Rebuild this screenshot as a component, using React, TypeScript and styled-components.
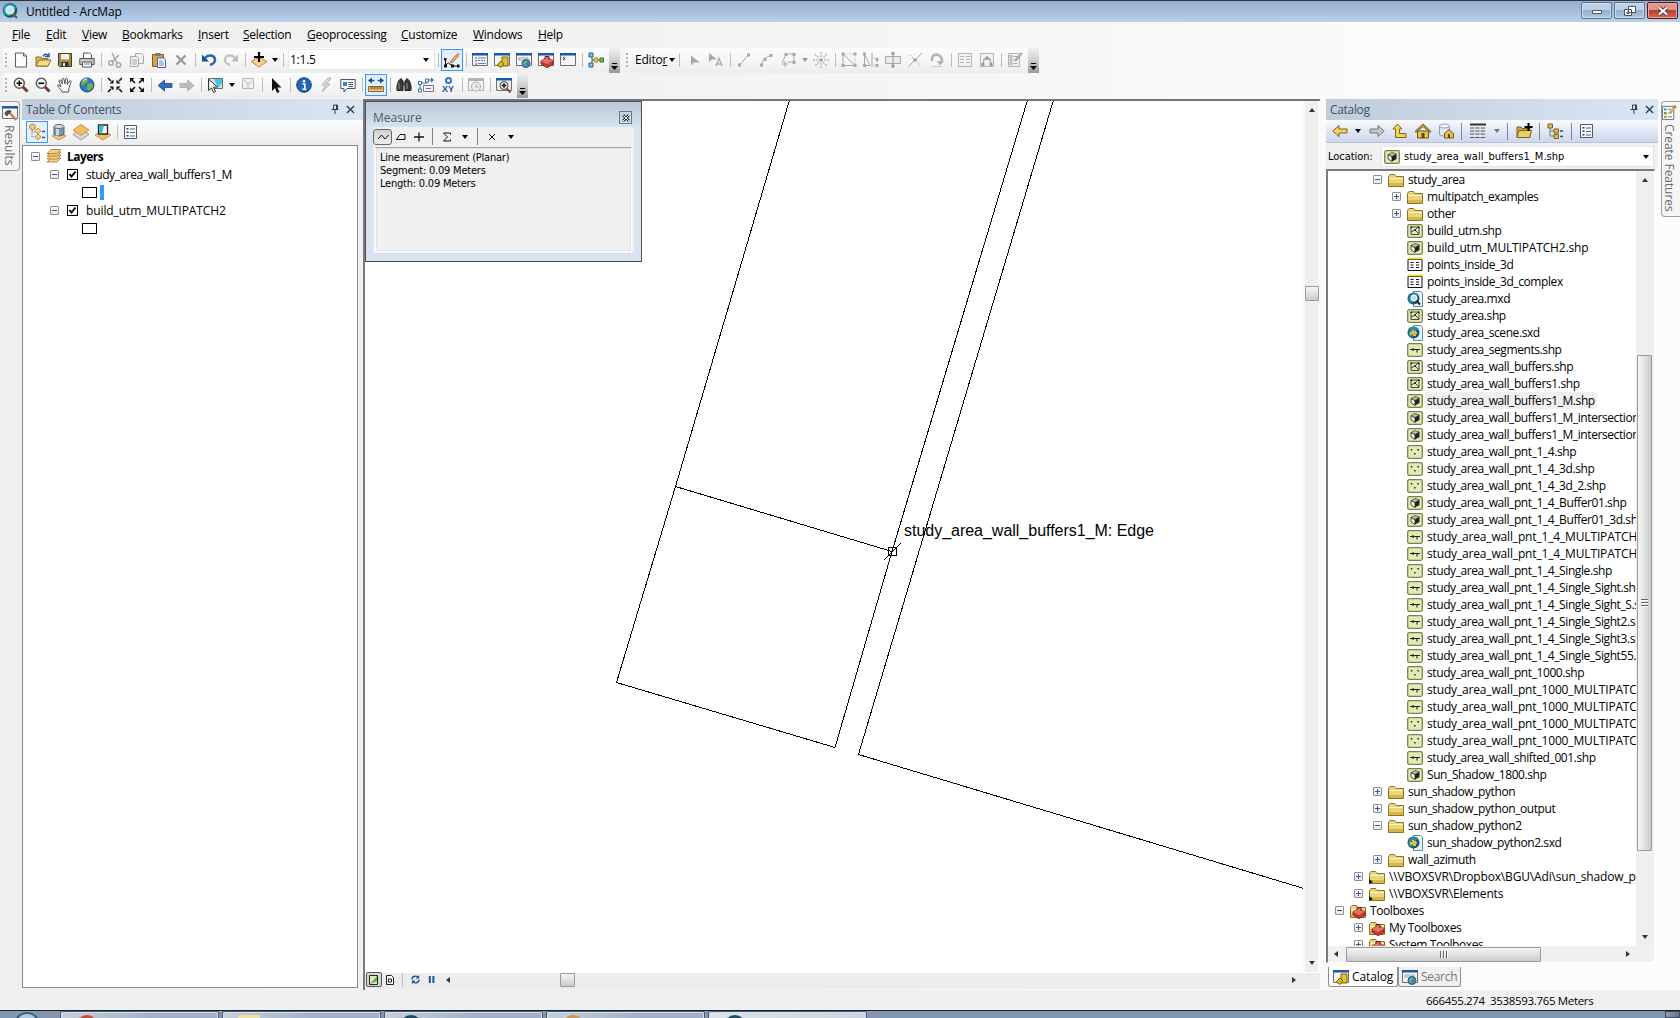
import React from "react";
import styled, { createGlobalStyle, css } from "styled-components";

const UI = `"Open Sans", "Noto Sans", sans-serif`;
const TAHOMA = `"DejaVu Sans Condensed", "DejaVu Sans", sans-serif`;

const Global = createGlobalStyle`
  * { box-sizing: border-box; }
  body { margin: 0; overflow: hidden; background: #f0f0f0; font-family: ${UI}; font-size: 12px; color: #000; }
`;

/* ---------- icons ---------- */

const folder = (
  <>
    <path d="M.5 4.500 2 2.500h4.500l1.500 2h7.500v10H.5z" fill="#e9d67a" stroke="#8c7420" />
    <path d="M1 6.500h14" stroke="#fdf6c4" />
    <path d="M1 11h14v3H1z" fill="#d3b94c" />
  </>
);
const toolbox = (
  <>
    <path d="M3 9 9 5.500l6 3v4l-6 3.200L3 12z" fill="#c63a30" stroke="#7d1712" strokeWidth=".8" />
    <path d="m3 9 6 3 6-3.500-6-3z" fill="#e2746a" />
    <path d="M7 7V4.500h4V8" fill="none" stroke="#6a1a15" />
  </>
);
const win = (
  <>
    <path d="M.5 1.500h15v12H.5z" fill="#f4f4f4" stroke="#6e6e6e" />
    <path d="M0 1h16v2.500H0z" fill="#1f57a8" />
  </>
);
const shp = <rect x=".7" y="1.700" width="14.600" height="12.600" rx="1.500" fill="#e1ecb4" stroke="#75844a" strokeWidth="1.300" />;
const globe = (
  <>
    <circle cx="8" cy="8" r="7" fill="#2f79bd" stroke="#1d4c80" />
    <path d="M4 3c3-2 6-1 5 1S6 6 5 8 2 7 2 6zM9 7c3-2 5 0 5 2s-3 5-5 4-1-5 0-6z" fill="#72b04d" />
    <path d="M4 4c1-1.500 3-2 4-1.700" stroke="#cfe9fa" strokeWidth="1.200" fill="none" />
  </>
);
const lens = (
  <>
    <path d="m9.500 9.500 5 5" stroke="#7c3b22" strokeWidth="3" />
    <circle cx="6.300" cy="6.300" r="5" fill="#f4f8fb" stroke="#5c5c5c" strokeWidth="1.500" />
  </>
);
const sheet = <path d="M6.500.500h7l2 2v13h-9z" fill="#e9f2f8" stroke="#5e87a8" />;
const mapGlobe = (
  <>
    <circle cx="6.500" cy="7.500" r="6" fill="#15597c" />
    <path d="M2 5c2-4 7-4 9-1l-3 3-3 5C1 12 1 8 2 5z" fill="#2a8f9b" />
  </>
);
const diamond = <path d="M8 8.500 15 12l-7 4-7-4z" fill="#f3c876" stroke="#b5823a" strokeWidth=".8" />;
const g = "#a9a9a9";

const icons: Record<string, React.ReactNode> = {
  app: (
    <>
      <circle cx="8" cy="7.500" r="7.300" fill="#0f5b70" />
      <path d="M1.500 5C3 0 12 0 14 5l-4 2-2 6C2 13 1 9 1.500 5z" fill="#2aa3a8" />
      <path d="m10 10 5 5" stroke="#8a5228" strokeWidth="2.400" />
      <circle cx="8" cy="7" r="4" fill="#bfe3f2" stroke="#e8f5fa" strokeWidth="1.200" />
    </>
  ),
  new: <path d="M2.500 1h8l3 3v11h-11zM10.500 1v3h3" fill="#fdfdff" stroke="#55606e" />,
  open: (
    <>
      <path d="M1 5h5l1 1.500h6V14H1z" fill="#d9b95c" stroke="#8c7024" />
      <path d="m1 14 3-6h12l-3 6z" fill="#f6dd85" stroke="#8c7024" />
      <path d="M8 4.500C9 1.500 12 2 13 3.500M14 1v3.500h-4" stroke="#1b5cab" strokeWidth="1.400" fill="none" />
    </>
  ),
  save: (
    <>
      <path d="M1.500 1.500h13v13h-12l-1-1z" fill="#a38b3c" stroke="#3f3a24" />
      <path d="M4 2h8v5.500H4z" fill="#f0f0f0" />
      <path d="M4.500 10h7v4h-7z" fill="#333" />
      <path d="M6 11h2v3H6z" fill="#eee" />
    </>
  ),
  print: (
    <>
      <path d="M4.500 6V1h6l2 2v3" fill="#fff" stroke="#555" />
      <path d="M.8 6.500h14.400v6H.8z" fill="#c9c9c4" stroke="#555" />
      <path d="M3.500 10h9v5h-9z" fill="#fff" stroke="#555" />
      <path d="M5 12h6" stroke="#4b7fb8" /><path d="M12 8h2" stroke="#d9a520" />
    </>
  ),
  cut: (
    <g fill="none" stroke={g} strokeWidth="1.500">
      <path d="m5 1 5 10M12 3 5 10" /><circle cx="4" cy="11" r="2.200" /><circle cx="11.500" cy="13" r="2.200" />
    </g>
  ),
  copy: (
    <g fill="#f1f1f1" stroke={g}>
      <path d="M6.500 1.500h6l2 2v8h-8z" /><path d="M1.500 4.500h6l2 2v8h-8zM3 8h5M3 10h5M3 12h5" />
    </g>
  ),
  paste: (
    <>
      <path d="M1.500 2.500h11v12h-11z" fill="#d8a04a" stroke="#8a5a1c" />
      <path d="M4.500 1h5v3h-5z" fill="#777" />
      <path d="M6.500 6h6l2 2v7.500h-8z" fill="#fff" stroke="#49658c" /><path d="M8 9h4M8 11h5M8 13h5" stroke="#5c86bf" />
    </>
  ),
  del: <path d="m3.500 3.500 9 9m0-9-9 9" stroke="#999" strokeWidth="2.400" />,
  undo: <><path d="M4 6c3-4 9-3 10 1 .5 3-2 5-5 6" fill="none" stroke="#2c63a8" strokeWidth="2.400" /><path d="M1 2.500v7h7z" fill="#1b4f95" /></>,
  redo: <><path d="M12 6C9 2 3 3 2 7c-.5 3 2 5 5 6" fill="none" stroke="#c4c4c4" strokeWidth="2.400" /><path d="M15 2.500v7H8z" fill="#bababa" /></>,
  add: <><path d="m8 5 8 4.500L8 15 0 9.500z" fill="#f4d18f" stroke="#b98b44" /><path d="M8 0v10M3 5h10" stroke="#000" strokeWidth="2.200" /></>,
  pencil: (
    <>
      <path d="M1.500 7v6l3-2 4 3h5" fill="none" stroke="#111" />
      <path d="M0 6h2.500v2.500H0zM0 12.500h3v3H0zM7 12.500h3v3H7zM13 12.500h2.500v3H13z" fill="#111" />
      <path d="m7 9 5.500-6.500L14.500 4 9 10l-2.500 1z" fill="#f2b44a" stroke="#7b5c33" strokeWidth=".7" /><path d="m12.500 2.500 1.200-2L16 2l-1.500 2z" fill="#d99a8f" />
    </>
  ),
  wToc: <>{win}<path d="M3 6h2M3 9h2M3 12h2" stroke="#1f57a8" /><path d="M6 6h8M6 11.500h8" stroke="#3c8fd0" /><path d="M6 8.500h7" stroke="#c44" strokeDasharray="2 1" /></>,
  wCat: <>{win}<path d="M8 5h6v9H8z" fill="#e3c22d" stroke="#7b6410" /><path d="m3 13 4-4 3 3-3 3.500z" fill="#d7b823" stroke="#7b6410" /></>,
  wSearch: <>{win}<path d="M3 6h9v2H3z" fill="#fff" stroke="#888" strokeWidth=".8" /><circle cx="10" cy="11.500" r="4" fill="#3b86ba" stroke="#2d5f87" /><path d="M9 9c2-1 3 1 1 2s0 3-1 3-3-3 0-5z" fill="#7dbb57" /></>,
  wTool: <>{win}{toolbox}</>,
  wPy: <>{win}<path d="m3 5 2 1.500L3 8" fill="none" stroke="#222" /></>,
  model: (
    <>
      <path d="M4 3v10M4 8h10" stroke="#555" />
      <path d="M1 1h4v4H1zM1 11h4v4H1z" fill="#7cc4ef" stroke="#1f5f9f" />
      <circle cx="8" cy="8" r="2.200" fill="#f3d43c" stroke="#8a7412" /><path d="M12 6h3.500v4H12z" fill="#86c063" stroke="#35702a" />
    </>
  ),
  zoomIn: <>{lens}<path d="M3.500 6.300h5.600M6.300 3.500v5.600" stroke="#000" strokeWidth="1.600" /></>,
  zoomOut: <>{lens}<path d="M3.500 6.300h5.600" stroke="#000" strokeWidth="1.600" /></>,
  hand: <path d="M5 15c-1-3-4-5-4.500-6.500C1 7.500 2.500 8 4 10L2 4c0-1.500 1.500-1.500 2 0l1.500 3L5 2.500C5 1 6.800 1 7 2.500L8 7l.5-5c.3-1.300 2-1 2 .5L10.300 7.500 12.500 4c.8-1 2 0 1.500 1l-2 6-.5 4z" fill="#fdfdfd" stroke="#444" strokeWidth=".9" />,
  globe,
  fixIn: <g stroke="#111" strokeWidth="1.600" fill="#111"><path d="m1 1 3 3M15 1l-3 3M1 15l3-3M15 15l-3-3" /><path d="M6.500 2.500v4h-4zM9.500 2.500v4h4zM6.500 13.500v-4h-4zM9.500 13.500v-4h4z" stroke="none" /></g>,
  fixOut: <g stroke="#111" strokeWidth="1.600" fill="#111"><path d="m6 6-3-3M10 6l3-3M6 10l-3 3M10 10l3 3" /><path d="M1 5.500V1h4.500zM15 5.500V1h-4.500zM1 10.500V15h4.500zM15 10.500V15h-4.500z" stroke="none" /></g>,
  back: <path d="M1 8.500 7.500 3v3.500H15v4H7.500V14z" fill="#2d6dc4" stroke="#1a4a92" strokeWidth=".8" />,
  fwd: <path d="M15 8.500 8.500 3v3.500H1v4h7.500V14z" fill="#bdbdbd" stroke="#a5a5a5" strokeWidth=".8" />,
  select: <><path d="M1.500 1.500h14v10h-14z" fill="#d7e6ea" stroke="#667" /><path d="M7 2h8v4l-4 5z" fill="#4cc3e4" /><path d="M1.500 2v11.500l3-2.500 2 4.500 2-1-2-4.300 4-.2z" fill="#f4f4f4" stroke="#333" /></>,
  clear: <path d="M2.500 1.500h11v10h-11zM4 3l4 4 4-3M8 7v4" fill="#f0f0f0" stroke="#b5b5b5" />,
  cursor: <path d="M4 1v13l3-3 2 5 2.500-1L9.300 10.500h4.200z" fill="#111" />,
  info: <><circle cx="8" cy="8" r="7.300" fill="#2565b4" stroke="#123f7b" /><circle cx="8" cy="4.300" r="1.300" fill="#fff" /><path d="M6.500 7h2.300v5M6.300 12.200h4" stroke="#fff" strokeWidth="1.600" fill="none" /></>,
  bolt: <path d="M10 1 4 8h3.500L4 15l8-8H8.500L13 1z" fill="#dcdcdc" stroke="#b0b0b0" />,
  popup: <><path d="M.8 2.500h14.400v9H7l-3 3.500v-3.500H.8z" fill="#f6fafd" stroke="#44586e" /><path d="M3 5h4v4H3z" fill="#3a86c7" /><path d="M8.500 5.500H13M8.500 7.500H13M8.500 9.500H13" stroke="#456" /></>,
  measure: <><path d="M1 3.500h5.500M9.500 3.500H15" stroke="#17539a" strokeWidth="1.700" /><path d="M4 .5v6L0 3.500zM12 .5v6l4-3z" fill="#17539a" /><path d="M.5 9.500h15v5H.5z" fill="#f1c981" stroke="#8d6325" /><path d="M3 10v2.500M5 10v2.500M7 10v2.500M9 10v2.500M11 10v2.500M13 10v2.500" stroke="#6d4715" /></>,
  binoc: <><path d="M2.500 4 5 1.500 7 4v9.500H1V9zM13.500 4 11 1.500 9 4v9.500h6V9z" fill="#3a3a3a" stroke="#222" /><path d="M7 5h2v4H7z" fill="#555" /><path d="M3 6v6M11 6v6" stroke="#999" /></>,
  route: <><path d="M2 13V6h7V3h4" fill="none" stroke="#2f73a7" /><path d="M.5 4.500h3v3h-3zM.5 12h3v3h-3zM7.500 2h3v3h-3z" fill="#fff" stroke="#2f73a7" /><path d="m13 .5 3 2.500-3 2.500z" fill="#2f73a7" /><path d="M5.500 8.500h10v6h-10zM8 11.500h5" fill="#eef" stroke="#778" /></>,
  time: <g fill="none" stroke="#b3b3b3" strokeWidth="1.200"><path d="M.5 13.500V1.500h15v12z" /><path d="M.5 3h15" strokeWidth="2" /><circle cx="8" cy="9.500" r="4.500" fill="#eee" /><path d="M8 7v3h2.500" /></g>,
  viewer: <>{win}<path d="m10.500 11.500 4 4" stroke="#8a4a2a" strokeWidth="2" /><circle cx="8" cy="8.500" r="4" fill="#f7f7f7" stroke="#444" /><path d="M5.500 8.500h5M8 6v5" stroke="#111" strokeWidth="1.300" /></>,
  eArrow: <path d="M5 3.500v10l3-3h6z" fill={g} />,
  eArrowA: <><path d="M1 1v9l3-2.500h5z" fill={g} /><path d="m8 14 3-7.500 3 7.500M9 12h4" fill="none" stroke="#b5b5b5" strokeWidth="1.600" /></>,
  eLine: <><path d="m3.500 13 9-10" stroke={g} /><path d="M2 11.500h3v3H2zM11 1.500h3v3h-3z" fill={g} /></>,
  eArc: <><path d="M3.500 13c1-6 4-7 9-9.500" stroke={g} fill="none" /><path d="M2 11.500h3v3H2zM5.500 6h3v3h-3zM11.500 2h3v3h-3z" fill={g} /></>,
  ePoly: <><path d="m2 11 4-9h8v8H8M5 9v6M2 12h6" stroke={g} fill="none" /><path d="M4.500 1h3v3h-3zM12.500 1h3v3h-3zM12.500 9h3v3h-3z" fill={g} /></>,
  eBurst: <><path d="M8 0v5M8 11v5M0 8h5M11 8h5M2 2l4 4M10 10l4 4M14 2l-4 4M6 10l-4 4" stroke="#b9b9b9" strokeWidth="1.500" strokeDasharray="2 1" /><path d="M6.500 6.500h3v3h-3z" fill="#999" /></>,
  eReshape: <><path d="M2 2v11.500h12L2 2" fill="none" stroke={g} /><path d="M3 2h11v10" fill="none" stroke={g} strokeDasharray="1 1.500" /><path d="M.5.500h3v3h-3zM.5 12h3v3h-3zM12.500 12h3v3h-3zM12.500.500h3v3h-3z" fill={g} /></>,
  eCut: <><path d="M1.500 2v11.500h5.500L1.500 2M9 1v14" fill="none" stroke={g} /><path d="m9 5 5 3v5H9" fill="none" stroke={g} strokeDasharray="1 1.500" /><path d="M0 .5h3v3H0zM0 12h3v3H0zM12.500 12h3v3h-3zM12.500 6h3v3h-3z" fill={g} /></>,
  eSplit: <><path d="M.5 4.500h15v7H.5z" fill="#ececec" stroke={g} /><path d="M8 1v14" stroke="#999" /><path d="M6.500 0h3v3h-3zM6.500 12.500h3v3h-3z" fill="#999" /></>,
  eX: <><path d="M1 15 15 1" stroke={g} /><path d="m3 3 10 10" stroke={g} strokeDasharray="1.500 1.500" /><path d="M6.500 6.500h3v3h-3z" fill="#999" /></>,
  eRot: <><path d="M3 9c-2-8 10-9 10 0" fill="none" stroke="#b5b5b5" strokeWidth="2.600" /><path d="M8 9h7l-4 4.500z" fill="#b0b0b0" /><path d="M3 14.500h10" stroke="#ccc" /></>,
  eTable: <path d="M1.500 1.500h13v13h-13zM3 4.500h4M3 7.500h4M3 10.500h4M9 4.500h4M9 7.500h4M9 10.500h4" fill="#f2f2f2" stroke="#b3b3b3" />,
  eSketch: <><path d="M1.500 1.500h13v13h-13z" fill="#f2f2f2" stroke="#b3b3b3" /><path d="m4 12 1-5h6l1 5" fill="none" stroke={g} strokeWidth="1.300" /><path d="M2.500 11h3v3h-3zM6.500 4.500h3v3h-3zM10.500 11h3v3h-3z" fill="#999" /></>,
  eCreate: <><path d="M1.500 1.500h11v13h-11z" fill="#f2f2f2" stroke="#b3b3b3" /><path d="M3 3.500h2v2H3zM3 7h2v2H3zM3 10.500h2v2H3zM6.500 4.500h5M6.500 8h3M6.500 11.500h4" stroke={g} fill="none" /><path d="m8 9 7-8" stroke="#aaa" strokeWidth="2.400" /></>,
  create: (
    <>
      <path d="M.5 1.500h12v14H.5z" fill="#fbfdff" stroke="#5f7286" />
      <path d="M2 3.500h3v2.500H2z" fill="#3fa0d8" /><path d="M2 7.500h3V10H2z" fill="#4ea64a" /><path d="M2 11.500h3V14H2z" fill="#e08a3a" />
      <path d="M6.500 8.500h4M6.500 12.500h4M6.500 4.500h3" stroke="#4c6687" />
      <path d="m8 9 5-6.500" stroke="#e0a648" strokeWidth="2.600" /><path d="m13 3 1.500-2" stroke="#d06a66" strokeWidth="3" />
    </>
  ),
  hammer: <>{win}<path d="M3 9c0-3 3-4 6-3l-1 2-2 1-1 2z" fill="#555" stroke="#222" strokeWidth=".7" /><path d="m8 8 6 7" stroke="#c8814d" strokeWidth="2.500" /></>,
  layers: <g fill="#f2cf8a" stroke="#b07e32" strokeWidth=".9"><path d="m1 14 4-4h10l-4 4z" /><path d="m1 11 4-4h10l-4 4z" /><path d="m1 8 4-4h10l-4 4z" /><path d="m1 5.500 4-4h10l-4 4z" /></g>,
  tDraw: <><path d="M3 4v9h5M3 8h5" fill="none" stroke="#777" strokeDasharray="1 1" /><circle cx="3.500" cy="3" r="2.800" fill="#f3cd86" stroke="#b98537" /><path d="m9 4 3 3-3 3-3-3zM9 10l3 3-3 3-3-3z" fill="#f3cd86" stroke="#b98537" strokeWidth=".8" /><path d="M13 7.500h3M13 13.500h3" stroke="#1f57a8" strokeWidth="1.500" /></>,
  tSource: <>{diamond}<path d="M3 2.500h10v8q-5 3-10 0z" fill="#7f95ad" stroke="#4e6178" /><path d="M5 4h3v7.500H5z" fill="#c9d5e1" /><ellipse cx="8" cy="2.500" rx="5" ry="2" fill="#d8e1ea" stroke="#52677f" /></>,
  tVis: <><path d="M0 10.500 8 5l8 5.500L8 16z" fill="#d8d8d8" stroke="#888" strokeWidth=".8" /><path d="M0 6 8 .5 16 6l-8 5.500z" fill="#f0be62" stroke="#b98537" strokeWidth=".8" /></>,
  tSel: <><path d="m8 6 8 5-8 5-8-5z" fill="#f0be62" stroke="#b98537" strokeWidth=".8" /><path d="M3.500 1h9v9h-9z" fill="#fff" stroke="#222" strokeWidth="1.300" /><path d="M4 1.500h5L7 9.500H4z" fill="#35bdd8" /></>,
  opts: <><path d="M2.500 1.500h12v13h-12z" fill="#f7fafd" stroke="#4a5a6c" /><path d="M4.500 4h2v1.500h-2zM4.500 7.500h2V9h-2zM4.500 11h2v1.500h-2z" fill="#2b3f57" /><path d="M8 5h5M8 8.500h5M8 12h5" stroke="#4c6687" /></>,
  cBack: <path d="M.8 8 7 2.500V6h8v4H7v3.500z" fill="#f0d35a" stroke="#7d6616" />,
  cFwd: <path d="M15.200 8 9 2.500V6H1v4h8v3.500z" fill="#c6c6c6" stroke="#777" />,
  cUp: <path d="M5.500 1 10 6H7.500v4.500H14v4H3.500V6H1z" fill="#f0d35a" stroke="#7d6616" />,
  home: <><path d="M2.500 8v7h11V8z" fill="#e6c651" stroke="#6d5812" /><path d="M0 8.500 8 1l8 7.500-1 .8L8 3.500 1 9.300z" fill="#cfae3a" stroke="#6d5812" /><path d="M6.500 10h3v5h-3z" fill="#5f4b0b" /></>,
  homeDb: <><path d="M1.500 3v9q5 3 10 0V3z" fill="#dfe8f3" stroke="#8ba0bb" /><ellipse cx="6.500" cy="3" rx="5" ry="2" fill="#f5f8fc" stroke="#8ba0bb" /><path d="m6.500 10.500 4.500-4 4.500 4v4.500h-9z" fill="#e3c04c" stroke="#6d5812" /><path d="M10 11h2v4h-2z" fill="#5f4b0b" /></>,
  grid: <><path d="M0 1.500h16" stroke="#333" strokeWidth="2" /><path d="M0 5h16M0 8h16M0 11h16M0 14.500h16" stroke="#555" strokeDasharray="4.300 1" /></>,
  folderAdd: <><path d="M1 4h4l1 1.500h8v9H1z" fill="#c8a93c" stroke="#7a6417" /><path d="m1 14.500 2-7h12.500l-2 7z" fill="#ead068" stroke="#7a6417" /><path d="M12.500 0v8M8.500 4h8" stroke="#000" strokeWidth="2" /></>,
  cTree: <><path d="M3 4v9h4M3 8h4" fill="none" stroke="#777" /><path d="M1 1h4.500v4H1zM7 6h4.500v4H7zM7 11.500h4.500v4H7z" fill="#d9bd49" stroke="#7a6417" /><path d="M13 8h3M13 13.500h3" stroke="#1f57a8" strokeWidth="1.500" /></>,
  folder,
  folderLink: <>{folder}<path d="M0 15v-5l4 3z" fill="#111" /></>,
  toolFolder: <>{folder}{toolbox}</>,
  poly: <>{shp}<path d="M4 4h8v7.500H4zM4 9l4-2 4 4M8 7l3-3" fill="none" stroke="#334" strokeWidth=".9" /><path d="M3.500 3.500H5V5H3.500zM7.300 6.300h1.500v1.500H7.300zM11 3.500h1.500V5H11z" fill="#111" /></>,
  line: <>{shp}<path d="M3 7.500h10M6 6v3M10 7v3.500" stroke="#222" strokeWidth="1.100" /></>,
  point: <>{shp}<path d="M3.800 5h1.600v1.600H3.800zM10.300 5h1.600v1.600h-1.600zM7 9h1.600v1.600H7z" fill="#333" /></>,
  patch: <>{shp}<path d="M4 5.500v4.300L8 12.500V7.500z" fill="#f7f7ef" stroke="#222" strokeWidth=".8" /><path d="m4 5.500 4-2 4.500 1.500L8 7.500z" fill="#b9bda5" stroke="#222" strokeWidth=".6" /><path d="m8 7.500 4.500-2.500v5L8 12.500z" fill="#222" /></>,
  table: <><path d="M1 2.500h14v11H1z" fill="#fff" stroke="#111" /><path d="M.5 1.500h15" stroke="#e8dc2e" strokeWidth="1.800" /><path d="M3.500 5.500h3M3.500 8h3M3.500 10.500h3M9 5.500h3M9 8h3M9 10.500h3" stroke="#111" strokeWidth="1.200" /></>,
  mxd: <>{sheet}{mapGlobe}<path d="m8.500 9 4.500 4.500" stroke="#222" strokeWidth="2" /><circle cx="7" cy="7" r="3" fill="#b9e1f0" stroke="#fff" /></>,
  sxd: <>{sheet}{mapGlobe}<path d="M3 7h2V5h2v1h2v1h1v2H9v2H6V9H5v1H3z" fill="#dcc23e" /></>,
};

const Svg = styled.svg<{ $s?: number }>`
  width: ${(p) => p.$s || 16}px;
  height: ${(p) => p.$s || 16}px;
  flex: none;
  display: block;
  overflow: visible;
`;
const Icon = ({ n, s }: { n: string; s?: number }) => (
  <Svg viewBox="0 0 16 16" $s={s} aria-hidden>
    {icons[n]}
  </Svg>
);

/* ---------- shell ---------- */

const Shell = styled.div`
  width: 1680px;
  height: 1018px;
  display: grid;
  grid-template-rows: 22px 26px 25px 25px 892px 20px 8px;
  overflow: hidden;
  background: linear-gradient(90deg, #efefef 0%, #f3f3f3 40%, #fbfbfb 85%, #fcfcfc 100%);
  white-space: nowrap;
`;

const TitleBar = styled.header`
  display: flex;
  align-items: center;
  border-top: 1px solid #35363c;
  padding: 0 0 1px 2px;
  background: linear-gradient(#94aecd, #b9d1ea);
`;
const TitleText = styled.span`
  margin-left: 8px;
  flex: 1;
  letter-spacing: -0.13px;
`;
const Captions = styled.div`
  display: flex;
  gap: 2px;
  padding-right: 2px;
  align-self: flex-start;
  margin-top: 1px;
`;
const Caption = styled.div<{ $close?: boolean }>`
  width: 31px;
  height: 17px;
  border-radius: 2px;
  display: grid;
  place-items: center;
  border: 1px solid ${(p) => (p.$close ? "#5a1420" : "#5f7391")};
  box-shadow: inset 0 0 0 1px ${(p) => (p.$close ? "#e8a79d" : "#cfdeee")};
  background: ${(p) =>
    p.$close
      ? "linear-gradient(#dc9a8f 0 45%, #b8402c 50%, #cf6b50)"
      : "linear-gradient(#bcd0e6 0 45%, #94afcd 50%, #aec8e2)"};
`;

const MenuBar = styled.nav`
  display: flex;
  align-items: center;
  padding: 0 0 2px 12px;
`;
const MenuItem = styled.div<{ $w: number }>`
  width: ${(p) => p.$w}px;
  letter-spacing: -0.27px;
  flex: none;
  &::first-letter {
    text-decoration: underline;
  }
`;

const BarRow = styled.div`
  display: flex;
  gap: 4px;
  padding-left: 3px;
`;
const Bar = styled.div<{ $w: number }>`
  width: ${(p) => p.$w}px;
  flex: none;
  height: 25px;
  padding-bottom: 2px;
  display: flex;
  align-items: center;
  background: linear-gradient(#fcfcfc, #f4f4f4 60%, #ededed);
  border-radius: 3px 0 0 3px;
`;
const Grip = styled.i`
  width: 7px;
  height: 14px;
  flex: none;
  background: repeating-linear-gradient(#b4b4b4 0 2px, transparent 2px 4px) 2px 0 / 2px 100% no-repeat;
`;
const Btn = styled.div<{ $on?: boolean; $w?: number }>`
  width: ${(p) => p.$w || 22}px;
  height: 22px;
  flex: none;
  display: grid;
  place-items: center;
  ${(p) =>
    p.$on &&
    css`
      border: 1px solid #3399ff;
      background: #e6eff9;
    `}
`;
const Sep = styled.i<{ $w?: number; $dark?: boolean }>`
  width: ${(p) => p.$w || 6}px;
  height: ${(p) => (p.$dark ? 17 : 14)}px;
  flex: none;
  background: linear-gradient(${(p) => (p.$dark ? "#7d8592, #7d8592" : "#bdbdbd, #bdbdbd")}) center / 1px 100% no-repeat;
`;
const Caret = styled.i<{ $w?: number; $c?: string }>`
  width: ${(p) => p.$w || 10}px;
  flex: none;
  display: grid;
  place-items: center;
  &::after {
    content: "";
    border: 3.500px solid transparent;
    border-top: 4px solid ${(p) => p.$c || "#000"};
    border-bottom: 0;
  }
`;
const Overflow = styled.div`
  width: 11px;
  height: 25px;
  margin-left: auto;
  align-self: flex-start;
  display: flex;
  align-items: flex-end;
  justify-content: center;
  padding-bottom: 3px;
  background: linear-gradient(#f0f0f0, #cfcfcf 50%, #999);
  &::after {
    content: "";
    width: 7px;
    height: 7px;
    clip-path: polygon(1px 0, 6px 0, 6px 1px, 1px 1px, 1px 3px, 7px 3px, 3.500px 100%, 0 3px, 1px 3px);
    background-color: #000;
  }
`;
const Scale = styled.div`
  width: 147px;
  height: 21px;
  margin: 0 1px;
  flex: none;
  display: flex;
  align-items: center;
  padding: 0 3px 0 1px;
  background: #fff;
  border: 1px solid #e3e6ea;
  span {
    flex: 1;
    letter-spacing: -0.25px;
  }
`;
const EditorLabel = styled.span`
  margin-left: 4px;
  width: 32px;
  letter-spacing: -0.2px;
`;
const Xy = styled.div`
  width: 16px;
  display: flex;
  flex-direction: column;
  align-items: center;
  font: bold 9px/8px "Liberation Sans", sans-serif;
  color: #15539b;
  i {
    width: 7px;
    height: 7px;
    border: 2px solid #2c7dc0;
    border-radius: 50%;
    margin-bottom: 1px;
  }
`;

/* ---------- work area ---------- */

const Work = styled.main`
  display: flex;
  min-height: 0;
`;
const Rail = styled.div<{ $w: number }>`
  width: ${(p) => p.$w}px;
  flex: none;
  padding-top: 3px;
`;
const SideTab = styled.div<{ $right?: boolean; $h: number }>`
  width: ${(p) => (p.$right ? 19 : 20)}px;
  height: ${(p) => p.$h}px;
  border: 1px solid #9b9b9b;
  border-radius: ${(p) => (p.$right ? "4px 0 0 4px" : "0 4px 4px 0")};
  ${(p) => (p.$right ? "border-right: 0; padding-right: 3px;" : "border-left: 0;")}
  background: #f6f6f6;
  display: flex;
  flex-direction: column;
  align-items: center;
  gap: 4px;
  padding-top: 3px;
  span {
    writing-mode: vertical-rl;
    color: #6a6a6a;
    line-height: 15px;
    letter-spacing: ${(p) => (p.$right ? -0.07 : 0.05)}px;
  }
`;

const Dock = styled.section<{ $w: number }>`
  width: ${(p) => p.$w}px;
  flex: none;
  display: flex;
  flex-direction: column;
  padding-top: 1px;
`;
const DockHead = styled.div<{ $r: number }>`
  height: 21px;
  flex: none;
  display: flex;
  align-items: center;
  padding: 0 ${(p) => p.$r}px 1px 4px;
  gap: 6px;
  background: linear-gradient(90deg, #bfcddb, #d9e6f4);
  color: #44505f;
  letter-spacing: -0.32px;
  span {
    flex: 1;
  }
`;
const Pin = () => (
  <Svg viewBox="0 0 10 10" $s={10}>
    <path d="M3.500 1h4v4.500M3.500 1v4.500M1.500 5.500h7M5 5.500V10M6.500 1v4.500" fill="none" stroke="#333f4c" />
  </Svg>
);
const Close = () => (
  <Svg viewBox="0 0 10 10" $s={9}>
    <path d="m1 1 8 8M9 1 1 9" stroke="#333f4c" strokeWidth="1.600" />
  </Svg>
);

const TocTools = styled.div`
  height: 25px;
  flex: none;
  display: flex;
  align-items: center;
  padding: 0 0 2px 4px;
  background: linear-gradient(#fbfbfb, #ececec);
`;
const TocBox = styled.div`
  width: 336px;
  height: 843px;
  background: #fff;
  border: 1px solid #828790;
  padding-top: 1px;
`;
const TocRow = styled.div<{ $pad: number; $bold?: boolean; $ls?: number }>`
  height: 18px;
  display: flex;
  align-items: center;
  padding-left: ${(p) => p.$pad}px;
  font-weight: ${(p) => (p.$bold ? 700 : 400)};
  letter-spacing: ${(p) => (p.$bold ? -0.55 : p.$ls ?? -0.41)}px;
`;
const Toggle = styled.i<{ $open?: boolean }>`
  width: 9px;
  height: 9px;
  flex: none;
  border: 1px solid #8e8f8f;
  border-radius: 1px;
  background: linear-gradient(#3a55a0, #3a55a0) center / 5px 1px no-repeat,
    ${(p) => (p.$open ? "" : "linear-gradient(#3a55a0, #3a55a0) center / 1px 5px no-repeat,")} linear-gradient(#fff, #e8e8e8);
`;
const Check = styled.i`
  width: 11px;
  height: 11px;
  border: 1px solid #000;
  margin: 0 8px;
  display: grid;
  place-items: center;
  background: #fff;
`;
const Swatch = styled.i`
  width: 15px;
  height: 11px;
  border: 1px solid #000;
  margin-right: 3px;
`;
const Mark = styled.i`
  width: 4px;
  height: 15px;
  background: #3399ff;
`;
const Gap = styled.i<{ $w: number }>`
  width: ${(p) => p.$w}px;
  flex: none;
`;

/* ---------- map ---------- */

const MapPane = styled.section`
  width: 957px;
  height: 891px;
  flex: none;
  display: grid;
  grid-template: 871px 17px / 940px 15px;
  border-top: 2px solid #757575;
  border-left: 2px solid #7b7b7b;
  margin-top: 1px;
  position: relative;
`;
const Canvas = styled.svg`
  width: 938px;
  height: 871px;
  background: #fff;
  text {
    font: 16px "Liberation Sans", Arial, sans-serif;
  }
`;
const VTrack = styled.div<{ $w: number }>`
  width: ${(p) => p.$w}px;
  display: flex;
  flex-direction: column;
  align-items: center;
  background: #efefef;
`;
const Thumb = styled.div<{ $w: number; $h: number; $v?: boolean }>`
  width: ${(p) => p.$w}px;
  height: ${(p) => p.$h}px;
  flex: none;
  border: 1px solid #9a9a9a;
  border-radius: 1px;
  display: grid;
  place-items: center;
  background: linear-gradient(${(p) => (p.$v ? "90deg" : "180deg")}, #f5f5f5, #e2e2e2 50%, #c9c9cb);
`;
const Arrow = styled.i<{ $d: "up" | "down" | "left" | "right" }>`
  width: 15px;
  height: 17px;
  flex: none;
  display: grid;
  place-items: center;
  &::after {
    content: "";
    border: 3.500px solid transparent;
    border-bottom: 4px solid #333;
    border-top: 0;
    transform: rotate(${(p) => ({ up: 0, right: 90, down: 180, left: 270 })[p.$d]}deg);
  }
`;
const Spacer = styled.i<{ $n: number; $v?: boolean }>`
  flex: none;
  ${(p) => (p.$v ? "height" : "width")}: ${(p) => p.$n}px;
`;
const GripLines = styled.i<{ $v?: boolean }>`
  width: ${(p) => (p.$v ? 7 : 8)}px;
  height: ${(p) => (p.$v ? 8 : 7)}px;
  background: repeating-linear-gradient(${(p) => (p.$v ? "180deg" : "90deg")}, #666 0 1px, #fafafa 1px 2px, transparent 2px 3px);
`;
const ViewBar = styled.div`
  grid-column: 1 / 3;
  display: flex;
  align-items: center;
  height: 17px;
  padding: 0 0 3px 1px;
  border-top: 1px solid #fff;
  background: #ececec;
`;
const ViewBtn = styled.div<{ $on?: boolean }>`
  width: 16px;
  height: 15px;
  display: grid;
  place-items: center;
  ${(p) => p.$on && "border: 1px solid #555; border-radius: 2px; background: #d5d5d5;"}
`;

const Dialog = styled.div`
  position: absolute;
  left: 0;
  top: 0;
  width: 277px;
  height: 161px;
  border: 1px solid #4a4d55;
  background: linear-gradient(#b9c8d7, #d7e3f1 26px);
  padding: 0 7px 8px;
  display: flex;
  flex-direction: column;
`;
const DialogHead = styled.div`
  height: 25px;
  display: flex;
  align-items: center;
  justify-content: space-between;
  padding: 6px 2px 0 0;
  color: #4d5a69;
  letter-spacing: -0.05px;
`;
const DialogClose = styled.div`
  width: 13px;
  height: 13px;
  border: 1px solid #66788e;
  display: grid;
  place-items: center;
`;
const DialogBody = styled.div`
  flex: 1;
  background: #f0f0f0;
  display: flex;
  flex-direction: column;
`;
const DialogTools = styled.div`
  height: 20px;
  display: flex;
  align-items: center;
  padding-bottom: 1px;
`;
const ToolCell = styled.div<{ $w: number; $on?: boolean }>`
  width: ${(p) => p.$w}px;
  height: 16px;
  display: grid;
  place-items: center;
  ${(p) => p.$on && "border: 1px solid #666; border-radius: 3px; background: linear-gradient(#d2d2d2, #ececec);"}
`;
const Readout = styled.div`
  flex: 1;
  margin: 0 2px 1px;
  border: 1px solid #fff;
  border-top-color: #a5a5a5;
  box-shadow: inset 0 0 0 1px #e2e2e6;
  padding: 3px 4px;
  font: 11px/13px ${TAHOMA};
  letter-spacing: -0.22px;
`;

/* ---------- catalog ---------- */

const CatTools = styled.div`
  height: 23px;
  flex: none;
  display: flex;
  align-items: center;
  padding-left: 3px;
  background: linear-gradient(#fafbfe, #e4e8f5 45%, #cdd6ee);
  border-bottom: 1px solid #b9c3dd;
`;
const Location = styled.div`
  height: 26px;
  flex: none;
  display: flex;
  align-items: center;
  padding: 1px 0 0 2px;
  background: #f0f0f0;
  font: 11px ${TAHOMA};
  > span {
    width: 53px;
    letter-spacing: -0.05px;
  }
`;
const LocField = styled.div`
  width: 273px;
  height: 21px;
  background: #fff;
  border: 1px solid #e1e4e8;
  display: flex;
  align-items: center;
  padding: 0 1px 0 2px;
  gap: 4px;
  letter-spacing: 0.03px;
  b {
    flex: 1;
    font-weight: 400;
  }
`;
const TreeFrame = styled.div`
  width: 329px;
  height: 794px;
  border: 1px solid #fff;
  border-left: 2px solid #7b7b7b;
  border-top: 2px solid #7b7b7b;
  display: grid;
  grid-template: 775px 16px / 308px 17px;
  background: #f0f0f0;
`;
const Tree = styled.div`
  overflow: hidden;
  background: #fff;
`;
const TreeRow = styled.div<{ $level: number }>`
  height: 17px;
  display: flex;
  align-items: center;
  padding-left: ${(p) => 7 + Math.round(p.$level * 19)}px;
`;
const TreeText = styled.span<{ $sel?: boolean; $wide?: boolean }>`
  margin-left: 2px;
  padding: 0 2px;
  line-height: 17px;
  letter-spacing: ${(p) => (p.$wide ? -0.16 : -0.41)}px;
  ${(p) => p.$sel && "background: #f0f0f0;"}
`;
const HTrack = styled.div`
  grid-column: 1 / 3;
  display: flex;
  align-items: center;
  background: #f0f0f0;
`;
const Tabs = styled.div`
  display: flex;
  padding: 4px 0 0 2px;
`;
const Tab = styled.div<{ $w: number; $on?: boolean }>`
  width: ${(p) => p.$w}px;
  height: 20px;
  display: flex;
  align-items: center;
  gap: 3px;
  padding-left: ${(p) => (p.$on ? 4 : 3)}px;
  border: 1px solid #8f8f8f;
  border-top: 0;
  border-radius: 0 0 3px 3px;
  background: ${(p) => (p.$on ? "#fff" : "#f0f0f0")};
  color: ${(p) => (p.$on ? "#000" : "#777")};
  letter-spacing: ${(p) => (p.$on ? -0.1 : -0.3)}px;
`;

/* ---------- bottom ---------- */

const Status = styled.footer`
  display: flex;
  align-items: center;
  justify-content: flex-end;
  background: #f0f0f0;
  font-size: 11.500px;
  letter-spacing: -0.34px;
  white-space: pre;
  span {
    width: 254px;
  }
`;
const TaskBar = styled.div`
  display: flex;
  gap: 3px;
  border-top: 1px solid #14202e;
  background: #8496ae;
  overflow: hidden;
`;
const Orb = styled.div`
  width: 26px;
  height: 26px;
  margin: 1px 17px 0 14px;
  flex: none;
  border-radius: 50%;
  border: 2px solid #3c5f85;
  background: #b3cade;
`;
const Task = styled.div<{ $on?: boolean }>`
  width: 159px;
  height: 30px;
  flex: none;
  border: 1px solid #4a5c73;
  border-radius: 2px;
  box-shadow: inset 0 0 0 1px #d5dfea;
  background: ${(p) => (p.$on ? "linear-gradient(90deg, #dde4ea, #c9d4df)" : "linear-gradient(100deg, #c5d0dc, #a0b0c5 60%)")};
  padding: 3px 0 0 15px;
`;
const Blob = styled.div<{ $c: string; $square?: boolean }>`
  width: 22px;
  height: 22px;
  border-radius: ${(p) => (p.$square ? "1px" : "50%")};
  background: ${(p) => p.$c};
`;
const ShowDesktop = styled.div`
  width: 15px;
  margin-left: auto;
  border: 1px solid #3b4a5d;
  background: linear-gradient(120deg, #93a2b4, #5f7187);
`;

const SEP = "|";
const IconRun = ({ list, on, w }: { list: string[]; on?: string; w?: number }) => (
  <>
    {list.map((n, i) =>
      n === SEP ? (
        <Sep key={i} />
      ) : (
        <Btn key={i} $on={n === on} $w={w}>
          <Icon n={n} />
        </Btn>
      )
    )}
  </>
);

const menus: [string, number][] = [
  ["File", 34], ["Edit", 36], ["View", 40], ["Bookmarks", 76], ["Insert", 45],
  ["Selection", 64], ["Geoprocessing", 94], ["Customize", 72], ["Windows", 65], ["Help", 40],
];

const W = "study_area_wall_";
const tree: [number, string, string, ("+" | "-")?][] = [
  [2, "folder", "study_area", "-"],
  [3, "folder", "multipatch_examples", "+"],
  [3, "folder", "other", "+"],
  [3, "poly", "build_utm.shp"],
  [3, "patch", "build_utm_MULTIPATCH2.shp"],
  [3, "table", "points_inside_3d"],
  [3, "table", "points_inside_3d_complex"],
  [3, "mxd", "study_area.mxd"],
  [3, "poly", "study_area.shp"],
  [3, "sxd", "study_area_scene.sxd"],
  [3, "line", "study_area_segments.shp"],
  [3, "poly", W + "buffers.shp"],
  [3, "poly", W + "buffers1.shp"],
  [3, "patch", W + "buffers1_M.shp"],
  [3, "patch", W + "buffers1_M_intersection.shp"],
  [3, "patch", W + "buffers1_M_intersection2.shp"],
  [3, "point", W + "pnt_1_4.shp"],
  [3, "point", W + "pnt_1_4_3d.shp"],
  [3, "point", W + "pnt_1_4_3d_2.shp"],
  [3, "patch", W + "pnt_1_4_Buffer01.shp"],
  [3, "patch", W + "pnt_1_4_Buffer01_3d.shp"],
  [3, "line", W + "pnt_1_4_MULTIPATCH.shp"],
  [3, "line", W + "pnt_1_4_MULTIPATCH2.shp"],
  [3, "point", W + "pnt_1_4_Single.shp"],
  [3, "line", W + "pnt_1_4_Single_Sight.shp"],
  [3, "line", W + "pnt_1_4_Single_Sight_S.shp"],
  [3, "line", W + "pnt_1_4_Single_Sight2.shp"],
  [3, "line", W + "pnt_1_4_Single_Sight3.shp"],
  [3, "line", W + "pnt_1_4_Single_Sight55.shp"],
  [3, "point", W + "pnt_1000.shp"],
  [3, "line", W + "pnt_1000_MULTIPATCH.shp"],
  [3, "line", W + "pnt_1000_MULTIPATCH.shp"],
  [3, "point", W + "pnt_1000_MULTIPATCH.shp"],
  [3, "point", W + "pnt_1000_MULTIPATCH.shp"],
  [3, "line", W + "shifted_001.shp"],
  [3, "patch", "Sun_Shadow_1800.shp"],
  [2, "folder", "sun_shadow_python", "+"],
  [2, "folder", "sun_shadow_python_output", "+"],
  [2, "folder", "sun_shadow_python2", "-"],
  [3, "sxd", "sun_shadow_python2.sxd"],
  [2, "folder", "wall_azimuth", "+"],
  [1, "folderLink", "\\\\VBOXSVR\\Dropbox\\BGU\\Adi\\sun_shadow_python", "+"],
  [1, "folderLink", "\\\\VBOXSVR\\Elements", "+"],
  [0, "toolFolder", "Toolboxes", "-"],
  [1, "toolFolder", "My Toolboxes", "+"],
  [1, "toolFolder", "System Toolboxes", "+"],
];

const CheckMark = () => (
  <Svg viewBox="0 0 9 9" $s={9}>
    <path d="m1.500 4 2 2.500L7.500 1.500" fill="none" stroke="#000" strokeWidth="1.800" />
  </Svg>
);

export default function App() {
  return (
    <>
      <Global />
      <Shell>
        <TitleBar>
          <Icon n="app" s={16} />
          <TitleText>Untitled - ArcMap</TitleText>
          <Captions>
            <Caption>
              <Svg viewBox="0 0 12 12" $s={12}><path d="M1.500 5.500h9v3h-9z" fill="#fff" stroke="#4a5568" /></Svg>
            </Caption>
            <Caption>
              <Svg viewBox="0 0 12 12" $s={12}><path d="M4.500 1.500h7v6h-7zM.5 4.500h7v6h-7zM3 7h2v1.500H3z" fill="#fff" stroke="#4a5568" /></Svg>
            </Caption>
            <Caption $close>
              <Svg viewBox="0 0 12 12" $s={12}><path d="m2 2.500 8 7m0-7-8 7" stroke="#5b3a44" strokeWidth="4" /><path d="m2 2.500 8 7m0-7-8 7" stroke="#fff" strokeWidth="2.200" /></Svg>
            </Caption>
          </Captions>
        </TitleBar>

        <MenuBar>
          {menus.map(([t, w]) => (
            <MenuItem key={t} $w={w}>{t}</MenuItem>
          ))}
        </MenuBar>

        <BarRow>
          <Bar $w={617}>
            <Grip />
            <IconRun list={["new", "open", "save", "print", SEP, "cut", "copy", "paste", "del", SEP, "undo", "redo", SEP, "add"]} />
            <Caret $w={10} />
            <Sep $w={7} />
            <Scale><span>1:1.5</span><Caret $w={10} /></Scale>
            <Sep $w={5} />
            <Btn $on><Icon n="pencil" /></Btn>
            <IconRun list={[SEP, "wToc", "wCat", "wSearch", "wTool", "wPy", SEP, "model"]} />
            <Overflow />
          </Bar>
          <Bar $w={415}>
            <Grip />
            <EditorLabel>Edito<u>r</u></EditorLabel>
            <Caret $w={9} />
            <Sep $w={7} />
            <IconRun list={["eArrow", "eArrowA", SEP, "eLine", "eArc", "ePoly"]} />
            <Caret $w={11} $c="#999" />
            <IconRun list={["eBurst", SEP, "eReshape", "eCut", "eSplit", "eX", "eRot", SEP, "eTable", "eSketch", SEP, "eCreate"]} />
            <Overflow />
          </Bar>
        </BarRow>

        <BarRow>
          <Bar $w={525}>
            <Grip />
            <IconRun list={["zoomIn", "zoomOut", "hand", "globe", SEP, "fixIn", "fixOut", SEP, "back", "fwd", SEP, "select"]} />
            <Caret $w={11} />
            <IconRun
              list={["clear", SEP, "cursor", SEP, "info", "bolt", "popup", SEP, "measure", SEP, "binoc", "route"]}
              on="measure"
            />
            <Btn><Xy><i />XY</Xy></Btn>
            <IconRun list={[SEP, "time", SEP, "viewer"]} />
            <Overflow />
          </Bar>
        </BarRow>

        <Work>
          <Rail $w={22}>
            <SideTab $h={70}><Icon n="hammer" /><span>Results</span></SideTab>
          </Rail>

          <Dock $w={341}>
            <DockHead $r={8}><span>Table Of Contents</span><Pin /><Close /></DockHead>
            <TocTools>
              <IconRun list={["tDraw", "tSource", "tVis", "tSel"]} on="tDraw" />
              <Sep $w={6} />
              <Btn $w={20}><Icon n="opts" /></Btn>
            </TocTools>
            <TocBox>
              <TocRow $pad={8} $bold>
                <Toggle $open /><Gap $w={6} /><Icon n="layers" /><Gap $w={5} />Layers
              </TocRow>
              <TocRow $pad={27}>
                <Toggle $open /><Check><CheckMark /></Check>study_area_wall_buffers1_M
              </TocRow>
              <TocRow $pad={59}><Swatch /><Mark /></TocRow>
              <TocRow $pad={27} $ls={-0.1}>
                <Toggle $open /><Check><CheckMark /></Check>build_utm_MULTIPATCH2
              </TocRow>
              <TocRow $pad={59}><Swatch /></TocRow>
            </TocBox>
          </Dock>

          <MapPane>
            <Canvas viewBox="365 101 938 871" shapeRendering="crispEdges">
              <g fill="none" stroke="#000">
                <path d="M789.500 100 675.500 486.500 616.500 682.500 835 747.500 892 551.500 1027.500 100M675.500 486.500 892 551.500" />
                <path d="M1053.500 100 858.500 754.500 1304 888.500" />
                <path d="M888.500 547.500h8v8h-8zM884 560l8-8M893 551l8-8" />
              </g>
              <text x="904" y="536" textLength="250">study_area_wall_buffers1_M: Edge</text>
            </Canvas>
            <VTrack $w={13}>
              <Arrow $d="up" />
              <Spacer $v $n={168} />
              <Thumb $w={14} $h={15} />
              <Spacer $v $n={653} />
              <Arrow $d="down" />
            </VTrack>
            <ViewBar>
              <ViewBtn $on>
                <Svg viewBox="0 0 10 10" $s={10}><path d="M.5.500h8v9h-8z" fill="#d8ecb8" stroke="#222" /><path d="m1 9 7-8v5z" fill="#6aa84f" /></Svg>
              </ViewBtn>
              <ViewBtn>
                <Svg viewBox="0 0 10 10" $s={10}><path d="M1.500.500h5l2 2v7h-7zM3.500 4h3v3h-3z" fill="#fff" stroke="#222" /></Svg>
              </ViewBtn>
              <Sep $w={9} />
              <ViewBtn>
                <Svg viewBox="0 0 10 10" $s={9}><path d="M1 5c0-4 6-5 7-2M9 5c0 4-6 5-7 2" fill="none" stroke="#1d55a0" strokeWidth="1.500" /><path d="M9 0v4H5zM1 10V6h4z" fill="#1d55a0" /></Svg>
              </ViewBtn>
              <ViewBtn>
                <Svg viewBox="0 0 10 10" $s={9}><path d="M2 1h2.200v8H2zM6 1h2.200v8H6z" fill="#1d55a0" /></Svg>
              </ViewBtn>
              <Gap $w={1} />
              <Arrow $d="left" />
              <Spacer $n={105} />
              <Thumb $w={15} $h={14} />
              <Spacer $n={711} />
              <Arrow $d="right" />
            </ViewBar>

            <Dialog>
              <DialogHead>
                Measure
                <DialogClose>
                  <Svg viewBox="0 0 8 8" $s={8}><path d="m1 1 6 6m0-6L1 7" stroke="#333" strokeWidth="2.600" /><path d="m1 1 6 6m0-6L1 7" stroke="#fff" /></Svg>
                </DialogClose>
              </DialogHead>
              <DialogBody>
                <DialogTools>
                  <ToolCell $w={19} $on><Svg viewBox="0 0 12 12" $s={12}><path d="m1 8 3.500-4L8 8l3.500-4" fill="none" stroke="#111" /></Svg></ToolCell>
                  <ToolCell $w={17}><Svg viewBox="0 0 12 12" $s={12}><path d="M1.500 8.500 5 3.500h5v5z" fill="none" stroke="#111" /></Svg></ToolCell>
                  <ToolCell $w={20}><Svg viewBox="0 0 12 12" $s={12}><path d="M1 6h10M6 1.500v9" stroke="#111" strokeWidth="1.300" /></Svg></ToolCell>
                  <Sep $w={7} $dark />
                  <ToolCell $w={21}><Svg viewBox="0 0 12 12" $s={12}><path d="M9.500 3.500v-1.500h-7l4 4-4 4h7V8.500" fill="none" stroke="#111" /></Svg></ToolCell>
                  <Caret $w={16} />
                  <Sep $w={9} $dark />
                  <ToolCell $w={20}><Svg viewBox="0 0 12 12" $s={12}><path d="m3 3 6 6m0-6L3 9" stroke="#111" /></Svg></ToolCell>
                  <Caret $w={17} />
                </DialogTools>
                <Readout>
                  <div>Line measurement (Planar)</div>
                  <div>Segment: 0.09 Meters</div>
                  <div>Length: 0.09 Meters</div>
                </Readout>
              </DialogBody>
            </Dialog>
          </MapPane>

          <Spacer $n={6} />

          <Dock $w={332}>
            <DockHead $r={4}><span>Catalog</span><Pin /><Close /></DockHead>
            <CatTools>
              <Btn><Icon n="cBack" /></Btn>
              <Caret $w={14} />
              <IconRun w={23} list={["cFwd", "cUp", "home", "homeDb"]} />
              <Sep $w={8} $dark />
              <Btn $w={25}><Icon n="grid" /></Btn>
              <Caret $w={13} $c="#777" />
              <Sep $w={8} $dark />
              <Btn $w={25}><Icon n="folderAdd" /></Btn>
              <Sep $w={6} $dark />
              <Btn $w={26}><Icon n="cTree" /></Btn>
              <Sep $w={6} $dark />
              <Btn $w={24}><Icon n="opts" /></Btn>
            </CatTools>
            <Location>
              <span>Location:</span>
              <LocField><Icon n="patch" /><b>study_area_wall_buffers1_M.shp</b><Caret $w={12} /></LocField>
            </Location>
            <TreeFrame>
              <Tree>
                {tree.map(([lv, ic, label, t], i) => (
                  <TreeRow key={i} $level={lv}>
                    {t ? <Toggle $open={t === "-"} /> : <Gap $w={9} />}
                    <Gap $w={6} />
                    <Icon n={ic} />
                    <TreeText $sel={i === 13} $wide={/MULTIPATCH|VBOX/.test(label)}>{label}</TreeText>
                  </TreeRow>
                ))}
              </Tree>
              <VTrack $w={17}>
                <Arrow $d="up" />
                <Spacer $v $n={167} />
                <Thumb $w={15} $h={496} $v><GripLines $v /></Thumb>
                <Spacer $v $n={77} />
                <Arrow $d="down" />
              </VTrack>
              <HTrack>
                <Arrow $d="left" />
                <Spacer $n={3} />
                <Thumb $w={195} $h={15}><GripLines /></Thumb>
                <Spacer $n={79} />
                <Arrow $d="right" />
              </HTrack>
            </TreeFrame>
            <Tabs>
              <Tab $w={70} $on><Icon n="wCat" />Catalog</Tab>
              <Tab $w={63}><Icon n="wSearch" />Search</Tab>
            </Tabs>
          </Dock>

          <Spacer $n={3} />
          <Rail $w={19}>
            <SideTab $right $h={116}><Icon n="create" s={15} /><span>Create Features</span></SideTab>
          </Rail>
        </Work>

        <Status><span>666455.274  3538593.765 Meters</span></Status>

        <TaskBar>
          <Orb />
          <Task><Blob $c="#d8473c" /></Task>
          <Task><Blob $c="#f0e3a0" $square /></Task>
          <Task><Blob $c="#174a6b" /></Task>
          <Task><Blob $c="#d9924a" /></Task>
          <Task $on><Blob $c="#1d4f5e" /></Task>
          <ShowDesktop />
        </TaskBar>
      </Shell>
    </>
  );
}
